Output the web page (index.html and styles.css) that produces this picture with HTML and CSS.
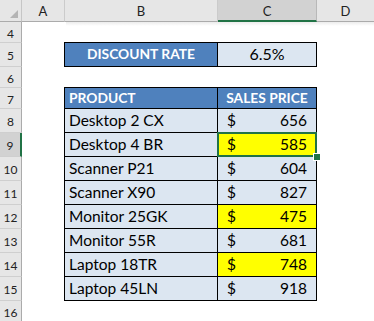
FILE: index.html
```html
<!DOCTYPE html>
<html>
<head>
<meta charset="utf-8">
<link rel="stylesheet" href="styles.css">
</head>
<body>
<div class="sheet">
  <div class="corner"><span class="tri"></span></div>
  <div class="ch">A</div>
  <div class="ch">B</div>
  <div class="ch sel">C</div>
  <div class="ch last">D</div>

  <div class="rh">4</div><div></div><div></div><div></div><div></div>

  <div class="rh">5</div><div></div>
  <div class="c hd b top center">DISCOUNT RATE</div>
  <div class="c lt c2 top center val">6.5%</div>
  <div></div>

  <div class="rh">6</div><div></div><div></div><div></div><div></div>

  <div class="rh">7</div><div></div>
  <div class="c hd b top short">PRODUCT</div>
  <div class="c hd c2 top center short">SALES PRICE</div>
  <div></div>

  <div class="rh">8</div><div></div>
  <div class="c lt b">Desktop 2 CX</div>
  <div class="c lt c2 money"><span>$</span><span>656</span></div>
  <div></div>

  <div class="rh rsel">9</div><div></div>
  <div class="c lt b">Desktop 4 BR</div>
  <div class="c yl c2 money active"><span>$</span><span>585</span><i class="selbox"></i><i class="handle"></i></div>
  <div></div>

  <div class="rh">10</div><div></div>
  <div class="c lt b">Scanner P21</div>
  <div class="c lt c2 money"><span>$</span><span>604</span></div>
  <div></div>

  <div class="rh">11</div><div></div>
  <div class="c lt b">Scanner X90</div>
  <div class="c lt c2 money"><span>$</span><span>827</span></div>
  <div></div>

  <div class="rh">12</div><div></div>
  <div class="c lt b">Monitor 25GK</div>
  <div class="c yl c2 money"><span>$</span><span>475</span></div>
  <div></div>

  <div class="rh">13</div><div></div>
  <div class="c lt b">Monitor 55R</div>
  <div class="c lt c2 money"><span>$</span><span>681</span></div>
  <div></div>

  <div class="rh">14</div><div></div>
  <div class="c lt b">Laptop 18TR</div>
  <div class="c yl c2 money"><span>$</span><span>748</span></div>
  <div></div>

  <div class="rh">15</div><div></div>
  <div class="c lt b">Laptop 45LN</div>
  <div class="c lt c2 money"><span>$</span><span>918</span></div>
  <div></div>

  <div class="rh">16</div><div></div><div></div><div></div><div></div>
  <i class="shade"></i>
</div>
</body>
</html>
```
FILE: styles.css
```css
html, body {
  margin: 0;
  padding: 0;
  background: #ffffff;
}
.sheet {
  position: relative;
  width: 374px;
  height: 321px;
  overflow: hidden;
  display: grid;
  grid-template-columns: 22px 43px 153px 99px 1fr;
  grid-template-rows: 22px 21px 24px 21px 21px repeat(8, 24px) 21px;
  font-family: "Lato", "Open Sans", sans-serif;
  color: #000;
}
.corner {
  position: relative;
  background: #e6e6e6;
  border-right: 1px solid #c6c6c6;
  border-bottom: 1px solid #ababab;
  box-sizing: border-box;
}
.tri {
  position: absolute;
  left: 10px;
  top: 10px;
  width: 0;
  height: 0;
  border-left: 8px solid transparent;
  border-bottom: 8px solid #b4b4b4;
}
.ch {
  background: #e6e6e6;
  border-right: 1px solid #cbcbcb;
  border-bottom: 1px solid #ababab;
  box-sizing: border-box;
  display: flex;
  align-items: center;
  justify-content: center;
  font-size: 13px;
  color: #222;
  padding-top: 1px;
}
.ch.last { border-right: none; }
.ch.sel {
  background: #d2d2d2;
  border-bottom: 2px solid #217346;
  border-right-color: #b8b8b8;
}
.rh {
  background: #e6e6e6;
  border-right: 1px solid #ababab;
  border-bottom: 1px solid #cfcfcf;
  box-sizing: border-box;
  display: flex;
  align-items: center;
  justify-content: center;
  font-size: 12px;
  color: #222;
  padding-top: 2px;
}
.rh.rsel {
  background: #d2d2d2;
  border-right: 2px solid #217346;
}
.c {
  box-sizing: border-box;
  border-right: 1px solid #000;
  border-bottom: 1px solid #000;
  display: flex;
  align-items: flex-end;
  font-size: 15.5px;
  line-height: 18px;
  padding: 0 4px 3px 4px;
  white-space: nowrap;
}
.c.short { padding-bottom: 1px; }
.c.b { box-shadow: -1px 0 0 #000; }
.c.b.top { box-shadow: -1px 0 0 #000, 0 -1px 0 #000, -1px -1px 0 #000; }
.c.c2.top { box-shadow: 0 -1px 0 #000; }
.c.center { justify-content: center; }
.hd {
  background: #4f81bd;
  color: #fff;
  font-weight: 700;
  font-size: 13.8px;
}
.lt { background: #dce6f1; }
.yl { background: #ffff00; }
.val { font-size: 16px; }
.money {
  justify-content: space-between;
  padding-left: 9px;
  padding-right: 9px;
}
.active { position: relative; }
.selbox {
  position: absolute;
  left: -1px;
  top: -1px;
  width: 100px;
  height: 25px;
  box-sizing: border-box;
  border: 2px solid #217346;
}
.handle {
  position: absolute;
  left: 96px;
  top: 21px;
  width: 6px;
  height: 6px;
  background: #217346;
  box-shadow: 0 0 0 1px #fff;
  z-index: 2;
}
.shade {
  position: absolute;
  left: 66px;
  top: 22px;
  right: 0;
  height: 4px;
  background: linear-gradient(#ececec, rgba(255,255,255,0));
}
```
